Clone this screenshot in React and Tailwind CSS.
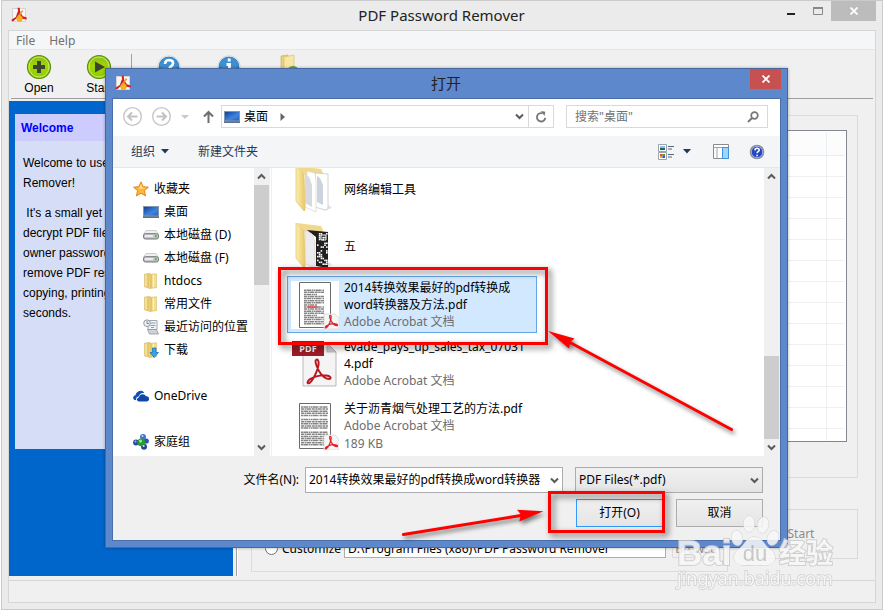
import React from 'react';

const ui = "font-['Noto_Sans','Noto_Sans_CJK_SC',sans-serif]";

function AppIcon() {
  return (
    <svg width="16" height="16" viewBox="0 0 16 16" aria-hidden="true">
      <path d="M1.5 1.5h13v13h-13z" fill="#f7f7f7" stroke="#d3d3d3" />
      <path d="M6.5 .8h2.2l.6 4.6 2.6 3.8 3.8 1.2v2l-4.6-.6L7.700 7z" fill="#d3211c" />
      <path d="M7 4l1.600 1.500-1.800 4.500-4.500 4.200H.6l.2-1.700 4-2.500z" fill="#c8201c" />
      <path d="M11 3l1.300 1.200L9 8.200 8 7.300z" fill="#f09b26" />
      <circle cx="8.500" cy="11.500" r="2.900" fill="#f7b51c" stroke="#e59610" strokeWidth=".6" />
      <path d="M7.500 8h2v3h-2z" fill="#f6a91e" />
    </svg>
  );
}

function GreenCircle({ children }) {
  return (
    <svg width="26" height="26" viewBox="0 0 26 26" aria-hidden="true">
      <defs>
        <linearGradient id="green" x1="0" y1="0" x2="0" y2="1">
          <stop offset="0" stopColor="#86b81c" />
          <stop offset=".45" stopColor="#a4d800" />
          <stop offset="1" stopColor="#8ccb00" />
        </linearGradient>
      </defs>
      <circle cx="13" cy="13" r="11.500" fill="url(#green)" stroke="#5f8f10" strokeWidth="1.200" />
      <circle cx="13" cy="13" r="10" fill="none" stroke="#c6e86a" strokeWidth="1" />
      {children}
    </svg>
  );
}

function BlueCircle({ glyph }) {
  return (
    <svg width="26" height="26" viewBox="0 0 26 26" aria-hidden="true">
      <circle cx="13" cy="13" r="11" fill="#1669b0" stroke="#d5dde5" strokeWidth="1.500" />
      <path d="M3 13a10 10 0 0 1 20 0q-10 3-20 0z" fill="#3d8fd0" />
      {glyph === 'help' ? (
        <path d="M9 10q.3-4 4.200-4 4 .2 3.900 3.300 0 1.800-2.200 3-1.500.9-1.500 2.700M13.400 17.500v2.500" fill="none" stroke="#fff" strokeWidth="2.600" />
      ) : (
        <path d="M13.200 4.500v3M10.500 10.500h3v8M10 19h7" fill="none" stroke="#fff" strokeWidth="2.900" />
      )}
    </svg>
  );
}

function ExitFolder() {
  return (
    <svg width="26" height="26" viewBox="0 0 26 26" aria-hidden="true">
      <path d="M5 2l7-1v22l-7-2z" fill="#e9cf7e" stroke="#c9a94e" strokeWidth=".6" />
      <path d="M8 3l10-2v20l-10 3z" fill="#f8e6a4" stroke="#d8bb62" strokeWidth=".6" />
      <ellipse cx="17" cy="15" rx="5" ry="3" fill="#6aa53a" />
    </svg>
  );
}

function Chevron({ up }) {
  return (
    <svg width="9" height="7" viewBox="0 0 9 7" aria-hidden="true">
      <path d={up ? 'M1 5.500L4.500 2 8 5.500' : 'M1 1.500L4.500 5 8 1.500'} fill="none" stroke="#5a5a5a" strokeWidth="2" />
    </svg>
  );
}

function Desktop() {
  return (
    <svg width="16" height="12" viewBox="0 0 16 12" aria-hidden="true">
      <defs>
        <linearGradient id="desk" x1="0" y1="0" x2="1" y2="1">
          <stop offset="0" stopColor="#123f9a" />
          <stop offset=".6" stopColor="#3f85dd" />
          <stop offset="1" stopColor="#2a63bd" />
        </linearGradient>
      </defs>
      <path d="M0 0h16v12H0z" fill="#8096b2" />
      <path d="M1 1h14v8.500H1z" fill="url(#desk)" />
      <path d="M0 10.500h16V12H0z" fill="#5c7086" />
    </svg>
  );
}

function Star() {
  return (
    <svg width="16" height="16" viewBox="0 0 16 16" aria-hidden="true">
      <path d="M8 .8l2.100 4.900 5.300.5-4 3.500 1.200 5.200L8 12.200l-4.600 2.700 1.200-5.200-4-3.500 5.300-.5z" fill="#fcb735" stroke="#e58224" />
      <path d="M8 2.500l1.300 4 3.500.4L6 8z" fill="#ffe08a" />
    </svg>
  );
}

function Drive() {
  return (
    <svg width="16" height="10" viewBox="0 0 16 10" aria-hidden="true">
      <path d="M3 .5h10l2.500 4h-15z" fill="#efefef" stroke="#c2c2c2" strokeWidth=".8" />
      <rect x=".5" y="3.700" width="15" height="5.300" rx="2" fill="#c4c4c7" stroke="#77777a" />
      <path d="M2 5h8v2H2z" fill="#ededed" />
      <path d="M12 5.300h1.700v2H12z" fill="#2fc43b" />
    </svg>
  );
}

function SmallFolder({ download }) {
  return (
    <svg width="16" height="16" viewBox="0 0 16 16" aria-hidden="true">
      <path d="M1.500 1l5.500-.6v14.800L1.500 14z" fill="#e8cb70" stroke="#d2b35a" strokeWidth=".5" />
      <path d="M6 1.500l7.500-.8v14L6 15.500z" fill="#f3dd8e" stroke="#d2b35a" strokeWidth=".5" />
      <path d="M8 1.300v14" stroke="#d1af4e" strokeWidth="1" />
      <path d="M3 1.500v12M10.500 2v12" stroke="#fff2bd" />
      {download && <path d="M9.500 6h3.500v4.500h2.500L11.200 15.500 7 10.500h2.500z" fill="#36a4ec" stroke="#1977bd" strokeWidth=".8" />}
    </svg>
  );
}

function Recent() {
  return (
    <svg width="16" height="16" viewBox="0 0 16 16" aria-hidden="true">
      <path d="M5 1.500h9v9H5z" fill="#f0f2f4" stroke="#a3a9ae" />
      <path d="M7.500 4h5M7.500 6.500h5M8 8.500h3" stroke="#73a8d0" />
      <path d="M4.500 10.500h9l2 4.500h-9z" fill="#cfd3d6" stroke="#8f969b" strokeWidth=".8" />
      <circle cx="4" cy="4.200" r="3.300" fill="#eef2f5" stroke="#8e979e" />
      <path d="M4 2v2.500h2" fill="none" stroke="#5f6b74" strokeWidth=".8" />
    </svg>
  );
}

function Cloud() {
  return (
    <svg width="16" height="12" viewBox="0 0 16 12" aria-hidden="true">
      <path d="M1 9.800C-.8 7.500.7 5.300 2.500 5.200 3 2.500 5.500 0 8.500.8q2 .5 2.800 2.200-4.500-.7-5.600 3.400-3 .3-2.500 3.900z" fill="#0f51b5" />
      <path d="M6 11.500c-2.600 0-2.700-3.600-.1-4 .4-3.800 5.700-4.600 7.100-1.200 3.800-.6 4.100 5 .7 5.200z" fill="#0f46a8" />
    </svg>
  );
}

function HomeGroup() {
  return (
    <svg width="16" height="16" viewBox="0 0 16 16" aria-hidden="true">
      <circle cx="3" cy="8.500" r="2.900" fill="#2a48a8" />
      <circle cx="10" cy="3" r="3" fill="#3f75c6" />
      <circle cx="13.300" cy="7" r="2.600" fill="#3350b4" />
      <circle cx="11" cy="12.700" r="3" fill="#2444a0" />
      <circle cx="8.300" cy="8.300" r="3.900" fill="#2a9a2e" />
      <circle cx="7.500" cy="7" r="1.500" fill="#a6e69a" />
      <circle cx="2.500" cy="7.500" r="1" fill="#9fb6ef" />
      <circle cx="9.500" cy="2" r="1" fill="#c0d8fa" />
      <circle cx="10.700" cy="12" r="1" fill="#cfe0fb" />
    </svg>
  );
}

function qrCells() {
  const cells = [];
  let seed = 7;
  for (let r = 0; r < 17; r++) {
    for (let c = 0; c < 6; c++) {
      seed = (seed * 73 + 41) % 1009;
      if (seed % 5 < 2) cells.push(<rect key={r + '-' + c} x={22 + c * 1.800} y={11 + r * 1.900} width="1.600" height="1.600" fill="#fff" />);
    }
  }
  return cells;
}

function BigFolder({ qr }) {
  return (
    <svg width="40" height="48" viewBox="0 0 40 48" aria-hidden="true">
      <defs>
        <linearGradient id="fold" x1="0" y1="0" x2="1" y2="0">
          <stop offset="0" stopColor="#fbeeb4" />
          <stop offset="1" stopColor="#e9c862" />
        </linearGradient>
      </defs>
      <path d="M28 46l9-3-3-3z" fill="#e4e4e4" />
      <path d="M2 1l24 3 2 4-1 6-17-4z" fill="#f0d98c" />
      {qr ? (
        <g>
          <path d="M12 8l21 2v36l-12-2V15z" fill="#202020" />
          {qrCells()}
          <path d="M26 13h5v5h-5z" fill="none" stroke="#fff" />
          <path d="M10 8l7 4 3 8v26l-10-4z" fill="#ececec" stroke="#cfcfcf" strokeWidth=".6" />
        </g>
      ) : (
        <g>
          <path d="M20 8l13 1v35l-3 1-10-3z" fill="#fff" stroke="#c9c9c9" strokeWidth=".8" />
          <path d="M22 11l3 2 3 7v20l-6-3z" fill="#ccd3df" />
          <path d="M12 6l8 2 1 8v31l-11-5z" fill="#fff" stroke="#cccccc" strokeWidth=".6" />
          <path d="M10 9l4 3 3 8v22l-7-4z" fill="#d6d9df" />
        </g>
      )}
      <path d="M1 1l8 8 1 36-1 1-8-10z" fill="url(#fold)" stroke="#e2c261" strokeWidth=".7" />
    </svg>
  );
}

const acrobat = 'M6.500 1C5 1.500 6.500 5 8 8c1.500 2.500 4 5 6.500 5 1.500-.5.500-2-2-2.200C9 10.500 5 11.500 2.500 13 .5 14.500.500 16 2 15.500 4.500 14 8 6 7.800 3 7.700 1.500 7.200.8 6.500 1z';

function DocThumb({ dense }) {
  const lines = [];
  for (let i = 0; i < 19; i++) {
    if (!dense && i < 2) continue;
    if (dense && (i === 5 || i === 11)) continue;
    lines.push(
      <path key={i} d={`M${dense ? 6 : 9} ${5 + i * 2.100}h${dense ? 27 : i % 5 === 4 ? 13 : 20}`} stroke="#858585" strokeWidth="1.500" strokeDasharray={i % 2 ? '3 .6 2 .4 4 .7' : '2 .4 5 .6 1 .5'} />
    );
  }
  return (
    <svg width="48" height="48" viewBox="0 0 48 48" aria-hidden="true">
      {!dense && <path d="M0 0h48v48H0z" fill="#fff" />}
      <path d="M8.500 1.500h31v45h-31z" fill="#fff" stroke="#6a6a6a" />
      <g transform="translate(4 0)">{lines}</g>
      {!dense && <path d="M17 26h9" stroke="#e44" strokeWidth="1.500" />}
      <path d="M33 33h11l4 4v11H33z" fill="#f5f5f5" stroke="#d8d8d8" strokeWidth=".8" />
      <g transform="translate(33.500 33.500) scale(.86)">
        <path d={acrobat} fill="none" stroke="#df2124" strokeWidth="1.400" />
      </g>
    </svg>
  );
}

function PdfFile() {
  return (
    <svg width="48" height="48" viewBox="0 0 48 48" aria-hidden="true">
      <path d="M12 3h24l9 9v34H12z" fill="#f4f4f4" stroke="#b9b9b9" />
      <path d="M36 3v9h9z" fill="#cfcfcf" stroke="#a9a9a9" strokeWidth=".7" />
      <path d="M1 1h32v15H1z" fill="#9e1b28" />
      <text x="17" y="12" textAnchor="middle" fontSize="9" fontWeight="700" fill="#fff" fontFamily="'Open Sans', sans-serif">PDF</text>
      <g transform="translate(15 18) scale(1.620)">
        <path d={acrobat} fill="none" stroke="#b71822" strokeWidth="1.200" />
      </g>
    </svg>
  );
}

function ScrollBar({ className, before, thumb }) {
  return (
    <div className={'flex shrink-0 flex-col items-center bg-[#f0f0f0] pr-px ' + className}>
      <button aria-label="Scroll up" className="flex h-[17px] w-full shrink-0 items-center justify-center"><Chevron up /></button>
      <div className={before} />
      <div className={'w-full bg-[#cdcdcd] ' + thumb} />
      <div className="flex-1" />
      <button aria-label="Scroll down" className="flex h-[17px] w-full shrink-0 items-center justify-center"><Chevron /></button>
    </div>
  );
}

const places = [
  ['收藏夹', Star, 0],
  ['桌面', Desktop, 1],
  ['本地磁盘 (D)', Drive, 1],
  ['本地磁盘 (F)', Drive, 1],
  ['htdocs', SmallFolder, 1],
  ['常用文件', SmallFolder, 1],
  ['最近访问的位置', Recent, 1],
  ['下载', () => <SmallFolder download />, 1],
  null,
  ['OneDrive', Cloud, 0],
  null,
  ['家庭组', HomeGroup, 0],
];

const files = [
  { name: '网络编辑工具', icon: <BigFolder />, box: 'h-[50px] pb-2' },
  { name: '五', icon: <BigFolder qr />, box: 'mb-0.5 h-14' },
  { name: '2014转换效果最好的pdf转换成word转换器及方法.pdf', type: 'Adobe Acrobat 文档', icon: <DocThumb />, box: 'h-[57px] border border-[#66a7e8] bg-[#d1e8ff]', selected: true },
  { name: 'evade_pays_up_sales_tax_070314.pdf', type: 'Adobe Acrobat 文档', icon: <PdfFile />, box: 'h-[62px]' },
  { name: '关于沥青烟气处理工艺的方法.pdf', type: 'Adobe Acrobat 文档', size: '189 KB', icon: <DocThumb dense />, box: 'h-[60px] pt-0.5' },
];

function OpenDialog() {
  return (
    <section aria-label="打开" className={'absolute left-[105px] top-[68px] flex h-[480px] w-[683px] flex-col border border-[#46679f] bg-[#5d88cc] px-1.5 pb-1.5 text-xs text-black shadow-[0_0_3px_rgba(0,0,0,0.3)] ' + ui}>
      <header className="flex h-[29px] shrink-0 items-start">
        <div className="flex flex-1 pl-[3px] pt-1.5"><AppIcon /></div>
        <h2 className="pr-1 pt-0.5 text-[15px] leading-6 text-[#222]">打开</h2>
        <div className="flex flex-1 justify-end">
          <button aria-label="Close dialog" className="flex h-5 w-[31px] items-center justify-center bg-[#c75050]">
            <svg width="8" height="8" viewBox="0 0 8 8"><path d="M.5.500l7 7M7.500.500l-7 7" stroke="#fff" strokeWidth="1.800" /></svg>
          </button>
        </div>
      </header>
      <div className="flex min-h-0 flex-1 flex-col border border-[#4a6eaa] bg-[#f0f0f0]">
        <div className="flex h-[37px] shrink-0 items-center bg-white pb-0.5 pl-2.5 pr-3">
          <button aria-label="Back" className="mr-2.5">
            <svg width="19" height="19" viewBox="0 0 19 19" fill="none" stroke="#c3c3c3"><circle cx="9.500" cy="9.500" r="8.800" strokeWidth="1.300" /><path d="M14.500 9.500h-9M9 5.500l-4 4 4 4" strokeWidth="2" /></svg>
          </button>
          <button aria-label="Forward" className="mr-2.5">
            <svg width="19" height="19" viewBox="0 0 19 19" fill="none" stroke="#c3c3c3"><circle cx="9.500" cy="9.500" r="8.800" strokeWidth="1.300" /><path d="M4.500 9.500h9M10 5.500l4 4-4 4" strokeWidth="2" /></svg>
          </button>
          <button aria-label="History" className="mr-3.5"><svg width="8" height="4" viewBox="0 0 8 4"><path d="M0 0h8L4 4z" fill="#c8c8c8" /></svg></button>
          <button aria-label="Up" className="mr-[7px]"><svg width="11" height="13" viewBox="0 0 11 13" fill="none" stroke="#6e6e6e" strokeWidth="2"><path d="M5.500 13V2M1 6.500l4.500-4.500L10 6.500" /></svg></button>
          <div className="flex h-[23px] flex-1 items-center border border-[#d9d9d9]">
            <button className="flex flex-1 items-center gap-1 pl-0.5 leading-5">
              <Desktop />桌面
              <svg className="ml-2" width="5" height="8" viewBox="0 0 5 8"><path d="M.5 0v8L5 4z" fill="#666" /></svg>
            </button>
            <button aria-label="Locations" className="px-1"><Chevron /></button>
            <button aria-label="Refresh" className="flex h-full w-[25px] items-center justify-center border-l border-[#d9d9d9]">
              <svg width="12" height="12" viewBox="0 0 12 12"><path d="M7.500 2.300A4.200 4.200 0 1 0 10.300 6.800" fill="none" stroke="#757575" strokeWidth="1.800" /><path d="M5.800 0l4.500.8-.8 4.200z" fill="#757575" /></svg>
            </button>
          </div>
          <div className="ml-3 flex h-[23px] w-[202px] items-center border border-[#d9d9d9] px-2">
            <input aria-label="Search" placeholder={'搜索"桌面"'} className="min-w-0 flex-1 bg-transparent outline-none placeholder:text-[#737373] placeholder:opacity-100" />
            <svg width="12" height="12" viewBox="0 0 12 12" fill="none" stroke="#777"><circle cx="7.500" cy="4.500" r="3.300" strokeWidth="1.700" /><path d="M5 7L1 11" strokeWidth="2" /></svg>
          </div>
        </div>
        <div className="flex h-8 shrink-0 items-center border-b border-[#e5e7ea] bg-[#f4f5f7] pl-[18px] pr-[15px] text-[#1e395b]">
          <button className="flex items-center gap-1.5">组织<svg width="8" height="5" viewBox="0 0 8 5"><path d="M0 0h8L4 4.500z" fill="#1e395b" /></svg></button>
          <button className="ml-[29px]">新建文件夹</button>
          <div className="flex-1" />
          <button aria-label="View" className="flex items-center gap-2">
            <svg width="17" height="16" viewBox="0 0 17 16">
              <path d="M.5.500h8v7h-8zM.5 8.500h8v7h-8z" fill="#fff" stroke="#9aa3ad" />
              <path d="M2 2h5v2H2z" fill="#8ac4e4" /><path d="M2 4h5v2H2z" fill="#24606c" />
              <path d="M2 10h2.500v2H2z" fill="#e14b2a" /><path d="M4.500 10H7v2H4.500z" fill="#5a9f24" /><path d="M2 12h2.500v2H2z" fill="#e6b51e" /><path d="M4.500 12H7v2H4.500z" fill="#3a50c4" />
              <path d="M10 2.500h6M10 5h4M10 10.500h6M10 13h4" stroke="#56647a" />
            </svg>
            <svg width="8" height="5" viewBox="0 0 8 5"><path d="M0 0h8L4 4.500z" fill="#1e395b" /></svg>
          </button>
          <button aria-label="Preview pane" className="ml-[22px]">
            <svg width="16" height="16" viewBox="0 0 16 16"><path d="M.5.500h15v14H.5z" fill="#fff" stroke="#8a8a8a" /><path d="M1 3.500h14M4 4v10" stroke="#a5a5a5" /><path d="M9.500 3.500h6v11h-6z" fill="#a3d3fb" stroke="#3d93e0" /></svg>
          </button>
          <button aria-label="Help" className="ml-5">
            <svg width="16" height="16" viewBox="0 0 16 16"><circle cx="8" cy="8" r="6.700" fill="#2146bd" stroke="#8b9098" strokeWidth="1.300" /><circle cx="8" cy="8" r="5.700" fill="none" stroke="#b9c8f0" strokeWidth=".8" /><path d="M5.900 6.300q.2-2.100 2.200-2.100 2.200.1 2.100 1.900 0 1-1.200 1.600-.9.500-.9 1.600M8.100 10.700v1.500" fill="none" stroke="#fff" strokeWidth="1.600" /></svg>
          </button>
        </div>
        <div className="flex h-[288px] shrink-0 bg-white">
          <nav className="w-[141px] shrink-0 pl-5 pt-[9px]">
            {places.map((p, i) => {
              if (!p) return <div key={i} className="h-[23px]" />;
              const Icon = p[1];
              return (
                <button key={i} className={'flex h-[23px] items-center gap-[5px] whitespace-nowrap ' + (p[2] ? 'pl-2.5' : '')}>
                  <Icon />{p[0]}
                </button>
              );
            })}
          </nav>
          <ScrollBar className="w-4" before="h-0" thumb="h-[100px]" />
          <div className="ml-px w-px bg-[#f0f0f0]" />
          <ul className="min-w-0 flex-1 overflow-hidden pl-[15px]">
            {files.map((f) => (
              <li key={f.name} className={'flex w-[250px] items-center ' + f.box}>
                <span className={'flex w-12 shrink-0 justify-center ' + (f.selected ? 'ml-[3px]' : 'ml-1')}>{f.icon}</span>
                <div className="ml-[5px] w-[184px]">
                  <p className="leading-[17px] wrap-break-word">{f.name}</p>
                  {f.type && <p className="leading-[18px] text-[#6d6d6d]">{f.type}</p>}
                  {f.size && <p className="leading-[18px] text-[#6d6d6d]">{f.size}</p>}
                </div>
              </li>
            ))}
          </ul>
          <ScrollBar className="w-4" before="h-[171px]" thumb="h-[83px]" />
        </div>
        <div className="flex flex-1 flex-col items-end pr-[17px] pt-[11px]">
          <div className="flex items-center">
            <label htmlFor="file-name" className="mr-1.5">文件名(N):</label>
            <div className="flex h-[26px] w-[258px] items-center border border-[#abadb3] bg-white pl-[3px]">
              <input id="file-name" defaultValue="2014转换效果最好的pdf转换成word转换器" className="min-w-0 flex-1 outline-none" />
              <button aria-label="Recent names" className="px-[3px]"><Chevron /></button>
            </div>
            <div className="relative ml-3 flex items-center">
              <select aria-label="File type" className="h-[26px] w-[188px] appearance-none border border-[#acacac] bg-linear-to-b from-[#f0f0f0] to-[#e5e5e5] pl-[3px] text-xs">
                <option>PDF Files(*.pdf)</option>
              </select>
              <span className="pointer-events-none absolute right-1"><Chevron /></span>
            </div>
          </div>
          <div className="mt-1.5 flex gap-[13px]">
            <button className="h-7 w-[87px] border border-[#3399ff] bg-linear-to-b from-[#f0f0f0] to-[#e5e5e5]">打开(O)</button>
            <button className="h-7 w-[87px] border border-[#acacac] bg-linear-to-b from-[#f0f0f0] to-[#e5e5e5]">取消</button>
          </div>
        </div>
      </div>
    </section>
  );
}

function ToolButton({ label, children }) {
  return (
    <button aria-label={label} className="flex h-[43px] w-[60px] shrink-0 flex-col items-center">{children}</button>
  );
}

export default function App() {
  return (
    <main className={'relative min-h-screen bg-white pl-px text-xs text-black ' + ui}>
      <div className="flex min-h-screen flex-col border border-[#cacaca] bg-[#ebebeb] px-1.5 pb-1.5">
        <header className="flex h-[29px] shrink-0 items-start">
          <div className="flex flex-1 pl-[3px] pt-1.5"><AppIcon /></div>
          <h1 className="pr-1 pt-0.5 text-[15px] leading-6 text-[#222]">PDF Password Remover</h1>
          <div className="flex flex-1 justify-end">
            <button aria-label="Minimize" className="flex w-[26px] justify-center pt-3"><svg width="8" height="2"><path d="M0 0h8v2H0z" fill="#222" /></svg></button>
            <button aria-label="Maximize" className="flex w-[27px] justify-center pt-1.5"><svg width="10" height="8"><path d="M.5 1h9v6.500h-9z" fill="none" stroke="#888" /><path d="M0 0h10v2H0z" fill="#888" /></svg></button>
            <button aria-label="Close" className="flex h-5 w-[45px] items-center justify-center bg-[#bcbcbc]"><svg width="8" height="8"><path d="M.5.500l7 7M7.500.500l-7 7" stroke="#fff" strokeWidth="1.800" /></svg></button>
          </div>
        </header>
        <div className="flex flex-1 flex-col border border-[#d6d6d6] bg-[#f0f0f0]">
          <nav className="flex h-[19px] shrink-0 items-center gap-3.5 border-b border-[#e6e6e6] bg-[#f5f6f7] pl-[7px] pt-0.5 text-[#707070]">
            <button>File</button>
            <button>Help</button>
          </nav>
          <div className="mx-0.5 flex h-[49px] shrink-0 items-start border-b border-[#a0a0a0] pt-1 font-['Liberation_Sans',Arial,sans-serif] leading-4">
            <div className="-ml-0.5 flex">
              <ToolButton label="Open"><GreenCircle><path d="M13 7v12M7 13h12" stroke="#3b4430" strokeWidth="4" /></GreenCircle>Open</ToolButton>
              <ToolButton label="Start"><GreenCircle><path d="M9 7.500l10 5.500-10 5.500z" fill="#3b4430" /></GreenCircle>Start</ToolButton>
            </div>
            <div className="ml-0.5 mr-[7px] h-10 w-px bg-[#a0a0a0]" />
            <ToolButton label="Help"><BlueCircle glyph="help" /></ToolButton>
            <ToolButton label="About"><BlueCircle glyph="info" /></ToolButton>
            <ToolButton label="Exit"><ExitFolder /></ToolButton>
          </div>
          <div className="mt-0.5 flex flex-1">
            <aside className="w-[224px] shrink-0 bg-[#0066cc] px-1.5 pt-[13px] font-['Liberation_Sans',Arial,sans-serif]">
              <div className="h-[335px] bg-[#d6def7]">
                <h2 className="h-[27px] bg-[#ccccff] pl-1.5 pt-px text-xs font-bold leading-[27px] text-[#0000ff]">Welcome</h2>
                <div className="pl-2 pt-3 leading-5">
                  <p>Welcome to use<br />Remover!</p>
                  <p className="mt-2.5 whitespace-pre">{" It's a small yet\ndecrypt PDF files\nowner password\nremove PDF rest\ncopying, printing\nseconds."}</p>
                </div>
              </div>
            </aside>
            <div className="ml-[3px] w-0.5 border-l border-[#a0a0a0] bg-white" />
            <div className="flex min-w-0 flex-1 flex-col pb-1 pl-[13px] pr-[17px] pt-3.5">
              <div className="flex h-[363px] shrink-0 border border-[#dcdcdc] px-2.5 pt-3.5">
                <div className="h-[312px] flex-1 overflow-hidden border border-[#828790] bg-white px-px pt-px">
                  <table className="w-full table-fixed border-separate border-spacing-0">
                    <thead>
                      <tr className="h-6 bg-[#fcfcfd]">
                        <th aria-label="File" className="border-b border-r border-[#e5eff8]" />
                        <th aria-label="State" className="w-[18px] border-b border-[#e5eff8]" />
                      </tr>
                    </thead>
                    <tbody>
                      {Array.from({ length: 14 }, (_, i) => (
                        <tr key={i} className="h-[21px]">
                          <td className="border-b border-r border-[#f0f0f0]" />
                          <td className="border-b border-[#f0f0f0]" />
                        </tr>
                      ))}
                    </tbody>
                  </table>
                </div>
              </div>
              <div className="mt-[13px] flex flex-1 items-stretch justify-between">
                <div className="flex w-[477px] items-end border border-[#dcdcdc] pb-[13px] pl-[13px]">
                  <label className="flex h-[19px] w-[79px] items-center gap-1">
                    <input type="radio" name="target" className="h-[13px] w-[13px] appearance-none rounded-full border border-[#707070] bg-white" />
                    Customize
                  </label>
                  <input aria-label="Output folder" defaultValue="D:\Program Files (x86)\PDF Password Remover" className="h-[19px] w-[322px] border border-[#abadb3] bg-white pl-[3px] outline-none" />
                  <button disabled className="ml-1.5 h-[19px] w-12 border border-[#dcdcdc] text-[#8b8b8b]">Browse</button>
                </div>
                <button disabled className="mt-[18px] h-[50px] w-[118px] border border-[#d9d9d9] pl-1 text-[#8b8b8b]">Start</button>
              </div>
            </div>
          </div>
          <footer className="mt-1 h-[22px] shrink-0 border-t border-[#d6d6d6]" />
        </div>
      </div>

      <OpenDialog />

      <div className="pointer-events-none absolute left-[278px] top-[267px] h-[78px] w-[270px] border-[3px] border-[#ff0000] drop-shadow-[3px_3px_3px_rgba(0,0,0,0.6)]" />
      <div className="pointer-events-none absolute left-[548px] top-[491px] h-[42px] w-[117px] border-[3px] border-[#ff0000] drop-shadow-[3px_3px_3px_rgba(0,0,0,0.6)]" />
      <svg className="pointer-events-none absolute left-0 top-0 drop-shadow-[2px_3px_2px_rgba(0,0,0,0.5)]" width="883" height="610" viewBox="0 0 883 610" aria-hidden="true">
        <path d="M731.500 429.500L571 343" stroke="#f00" strokeWidth="3" strokeLinecap="round" />
        <path d="M548 331l26.500 7.500-4 3.500-1.500 6.500z" fill="#f00" />
        <path d="M403.500 534.500L521 515.500" stroke="#f00" strokeWidth="3" strokeLinecap="round" />
        <path d="M543.500 511.200L517 509.800l4 4.700-1.700 7z" fill="#f00" />
      </svg>
      <svg className="pointer-events-none absolute left-[670px] top-[510px]" width="175" height="85" viewBox="0 0 175 85" fill="#f8f8f8" stroke="#cacaca" strokeWidth="1" paintOrder="stroke" opacity=".85" aria-label="Baidu">
        <text x="7" y="55" fontSize="35" fontWeight="700" fontFamily="'Liberation Sans', sans-serif" strokeWidth="2">Bai</text>
        <ellipse cx="67" cy="28" rx="5.500" ry="7.500" transform="rotate(-10 67 28)" />
        <ellipse cx="79" cy="14" rx="5.500" ry="8" />
        <ellipse cx="93" cy="15" rx="5.500" ry="8" transform="rotate(12 93 15)" />
        <ellipse cx="103" cy="28" rx="5.500" ry="7.500" transform="rotate(20 103 28)" />
        <path d="M84 27c9 0 10 9 16 12 8 6 6 15-2 16-6 .5-19 .5-26 0-9-1-11-10-3-16 6-4 7-12 15-12z" />
        <text x="85" y="51" textAnchor="middle" fontSize="22" fontFamily="'Liberation Sans', sans-serif" fill="#c2c2c2" stroke="none">du</text>
        <text x="109" y="53" fontSize="27" fontWeight="700" fontFamily="'Noto Sans CJK SC', sans-serif" strokeWidth="2">经验</text>
        <text x="7" y="75" fontSize="18" fontFamily="'Noto Sans', sans-serif" strokeWidth="1.500">jingyan.baidu.com</text>
      </svg>
    </main>
  );
}
